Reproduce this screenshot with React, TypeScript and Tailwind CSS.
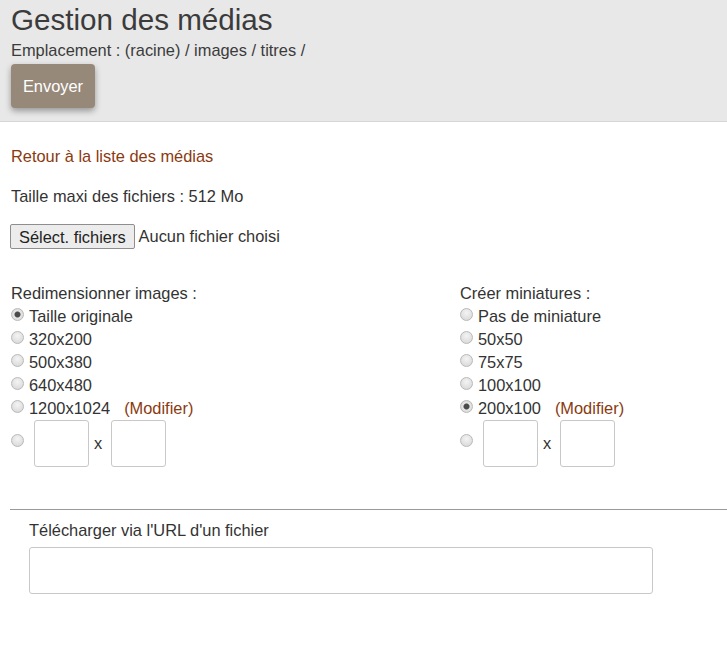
import React, { useState } from "react";

const RESIZE = ["Taille originale", "320x200", "500x380", "640x480", "1200x1024"];
const THUMBS = ["Pas de miniature", "50x50", "75x75", "100x100", "200x100"];

const radioClass =
  "m-0 h-[13px] w-[13px] shrink-0 appearance-none rounded-full border border-[#b9b9b9] bg-[radial-gradient(circle_at_50%_35%,#f4f4f4_0,#d4d4d4_100%)] checked:bg-[radial-gradient(circle,#4a4a4a_0,#4a4a4a_2.5px,#e6e6e6_3.5px,#d0d0d0_100%)]";

interface SizeGroupProps {
  name: string;
  title: string;
  options: string[];
  initial: number;
  className?: string;
}

const SizeGroup: React.FC<SizeGroupProps> = ({ name, title, options, initial, className }) => {
  const [selected, setSelected] = useState(initial);

  return (
    <div className={className}>
      <div className="h-[23px] leading-[23px]">{title}</div>
      {options.map((label, i) => (
        <label key={label} className="flex h-[23px] items-center leading-[23px]">
          <input
            type="radio"
            name={name}
            checked={selected === i}
            onChange={() => setSelected(i)}
            className={`${radioClass} mr-[5px] -translate-y-[2px]`}
          />
          <span>{label}</span>
          {i === options.length - 1 && (
            <a href="#" className="ml-[14px] text-[#8a3a0f]">
              (Modifier)
            </a>
          )}
        </label>
      ))}
      <div className="flex items-center">
        <input
          type="radio"
          name={name}
          checked={selected === -1}
          onChange={() => setSelected(-1)}
          className={`${radioClass} mr-[10px] -translate-y-[3px]`}
        />
        <input
          type="text"
          className="h-[47px] w-[55px] rounded-[3px] border border-[#c8c8c8] bg-white"
        />
        <span className="ml-[5px] mr-[9px]">x</span>
        <input
          type="text"
          className="h-[47px] w-[55px] rounded-[3px] border border-[#c8c8c8] bg-white"
        />
      </div>
    </div>
  );
};

export default function App() {
  return (
    <div className="min-h-[645px] overflow-hidden bg-white font-['Liberation_Sans',Arial,sans-serif] text-[16.4px] text-[#333]">
      <header className="border-b border-[#d6d6d6] bg-[#e8e8e8] px-[11px] pb-[13px] pt-[3px]">
        <h1 className="text-[29.6px] leading-[34px] text-[#3b3b3b]">Gestion des médias</h1>
        <p className="mt-[1px] leading-[24px] text-[#3b3b3b]">
          Emplacement : (racine) / images / titres /
        </p>
        <button
          type="button"
          className="mt-[2px] h-[44px] w-[84px] rounded-[4px] bg-[#978979] text-white shadow-[0_3px_6px_rgba(0,0,0,0.35)]"
        >
          Envoyer
        </button>
      </header>

      <main className="pl-[11px] pt-[24px]">
        <a href="#" className="block leading-[20px] text-[#8a3a0f]">
          Retour à la liste des médias
        </a>
        <p className="mt-[20px] leading-[20px]">Taille maxi des fichiers : 512 Mo</p>
        <div className="-ml-[1px] mt-[18px] flex items-center">
          <button
            type="button"
            className="h-[25px] rounded-[2px] border border-[#8e8e8e] bg-[#ececec] px-[8px] text-[#222]"
          >
            Sélect. fichiers
          </button>
          <span className="ml-[4px]">Aucun fichier choisi</span>
        </div>

        <div className="mt-[33px] flex">
          <SizeGroup
            name="resize"
            title="Redimensionner images :"
            options={RESIZE}
            initial={0}
            className="w-[449px] shrink-0"
          />
          <SizeGroup
            name="thumb"
            title="Créer miniatures :"
            options={THUMBS}
            initial={4}
            className="flex-1"
          />
        </div>

        <hr className="-ml-[1px] mt-[42px] border-t border-[#999]" />

        <div className="pl-[18px] pt-[10px]">
          <label className="block leading-[20px]">Télécharger via l'URL d'un fichier</label>
          <input
            type="text"
            className="mt-[7px] h-[47px] w-[624px] rounded-[3px] border border-[#c8c8c8] bg-white"
          />
        </div>
      </main>
    </div>
  );
}
